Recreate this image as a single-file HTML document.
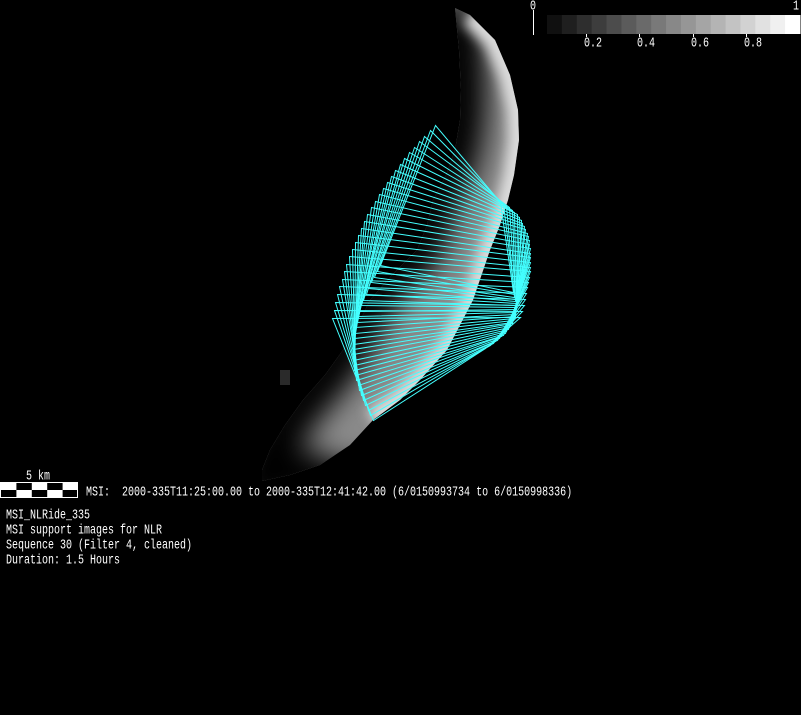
<!DOCTYPE html>
<html><head><meta charset="utf-8"><style>
html,body{margin:0;padding:0;background:#000;width:801px;height:715px;overflow:hidden}
.t{position:absolute;font-family:"Liberation Mono",monospace;font-size:10px;color:#fff;white-space:pre;line-height:11px;transform:scale(1,1.36);transform-origin:0 0}
</style></head><body>
<svg width="801" height="715" style="position:absolute;left:0;top:0">
<defs>
<clipPath id="cp"><path id="cres" d="M455,8 L470,15 L495,40 L510,75 L518,110 L519,140 L514,175 L508,200 L500,225 L490,250 L473,300 L447,350 L420,380 L400,400 L373,420 L350,445 L320,465 L290,475 L262,481 L262,470 L270,450 L285,425 L303,400 L325,375 L343,350 L358,325 L370,300 L392,275 L417,250 L427,225 L433,200 L446,175 L455,150 L460,120 L461,90 L459,50 Z"/></clipPath>
<filter id="b1" x="-50%" y="-50%" width="200%" height="200%"><feGaussianBlur stdDeviation="14"/></filter>
<filter id="b2" x="-50%" y="-50%" width="200%" height="200%"><feGaussianBlur stdDeviation="6"/></filter>
</defs>
<g clip-path="url(#cp)">
<rect x="250" y="0" width="300" height="490" fill="#8a8a8a"/>
<path d="M490,470 L350,490 L300,475 L290,475 L262,481 L262,470 L270,450 L285,425 L303,400 L325,375 L343,350 L358,325 L370,300 L392,275 L417,250 L427,225 L433,200 L446,175 L455,150 L460,120 L461,90 L459,50 L455,8" fill="none" stroke="#000" stroke-width="50" filter="url(#b1)"/>
<path d="M470,15 L495,40 L510,75 L518,110 L519,140 L514,175 L508,200 L500,225 L490,250 L473,300 L447,350 L420,380 L400,400 L373,420" fill="none" stroke="#ddd" stroke-width="22" filter="url(#b2)"/>
</g>
<rect x="280" y="370" width="10" height="15" fill="#2a2a2a"/>
<g id="c" fill="none" stroke="#4ff" stroke-width="1"></g>
<g id="cb"></g>
<line x1="533.5" y1="10" x2="533.5" y2="35" stroke="#fff"/>
<rect x="0.5" y="482.5" width="77" height="15" fill="#000" stroke="#fff"/>
<g id="sb"></g>
</svg>
<div class="t" style="left:530px;top:0px">0</div>
<div class="t" style="left:793px;top:0px">1</div>
<div class="t" style="left:584px;top:37px">0.2</div>
<div class="t" style="left:637px;top:37px">0.4</div>
<div class="t" style="left:691px;top:37px">0.6</div>
<div class="t" style="left:744px;top:37px">0.8</div>
<div class="t" style="left:26px;top:470px">5 km</div>
<div class="t" style="left:86px;top:486px">MSI:  2000-335T11:25:00.00 to 2000-335T12:41:42.00 (6/0150993734 to 6/0150998336)</div>
<div class="t" style="left:6px;top:509px">MSI_NLRide_335
MSI support images for NLR
Sequence 30 (Filter 4, cleaned)
Duration: 1.5 Hours</div>
<script>
var ns="http://www.w3.org/2000/svg";
function q(a,b,c,t){return [(1-t)*(1-t)*a[0]+2*t*(1-t)*b[0]+t*t*c[0],(1-t)*(1-t)*a[1]+2*t*(1-t)*b[1]+t*t*c[1]];}
var P=[[[435,125],[355,200],[332,318]],[[500,202],[548,225],[520,317]],[[513,292],[525,325],[485,348]],[[380,265],[330,350],[373,420]]];
var g=document.getElementById('c');var N=30;
for(var i=0;i<N;i++){var t=i/(N-1);var pts=P.map(function(p){return q(p[0],p[1],p[2],t).map(function(v){return Math.round(v)+0.5}).join(',')}).join(' ');
var e=document.createElementNS(ns,'polygon');e.setAttribute('points',pts);g.appendChild(e);}
var cb=document.getElementById('cb');
for(var i=0;i<17;i++){var r=document.createElementNS(ns,'rect');var x=547+i*253/17;r.setAttribute('x',x);r.setAttribute('y',15);r.setAttribute('width',253/17+0.5);r.setAttribute('height',19);var v=Math.round(16+i*(239/16));r.setAttribute('fill','rgb('+v+','+v+','+v+')');cb.appendChild(r);}
[586,639,693,746].forEach(function(x){var l=document.createElementNS(ns,'line');l.setAttribute('x1',x+.5);l.setAttribute('x2',x+.5);l.setAttribute('y1',34);l.setAttribute('y2',37);l.setAttribute('stroke','#fff');cb.appendChild(l);});
var sb=document.getElementById('sb');
for(var i=0;i<5;i++)for(var j=0;j<2;j++){if((i+j)%2==0){var r=document.createElementNS(ns,'rect');r.setAttribute('x',1+i*15.4);r.setAttribute('y',483+j*7);r.setAttribute('width',15.4);r.setAttribute('height',7);r.setAttribute('fill','#fff');sb.appendChild(r);}}
</script>
</body></html>
